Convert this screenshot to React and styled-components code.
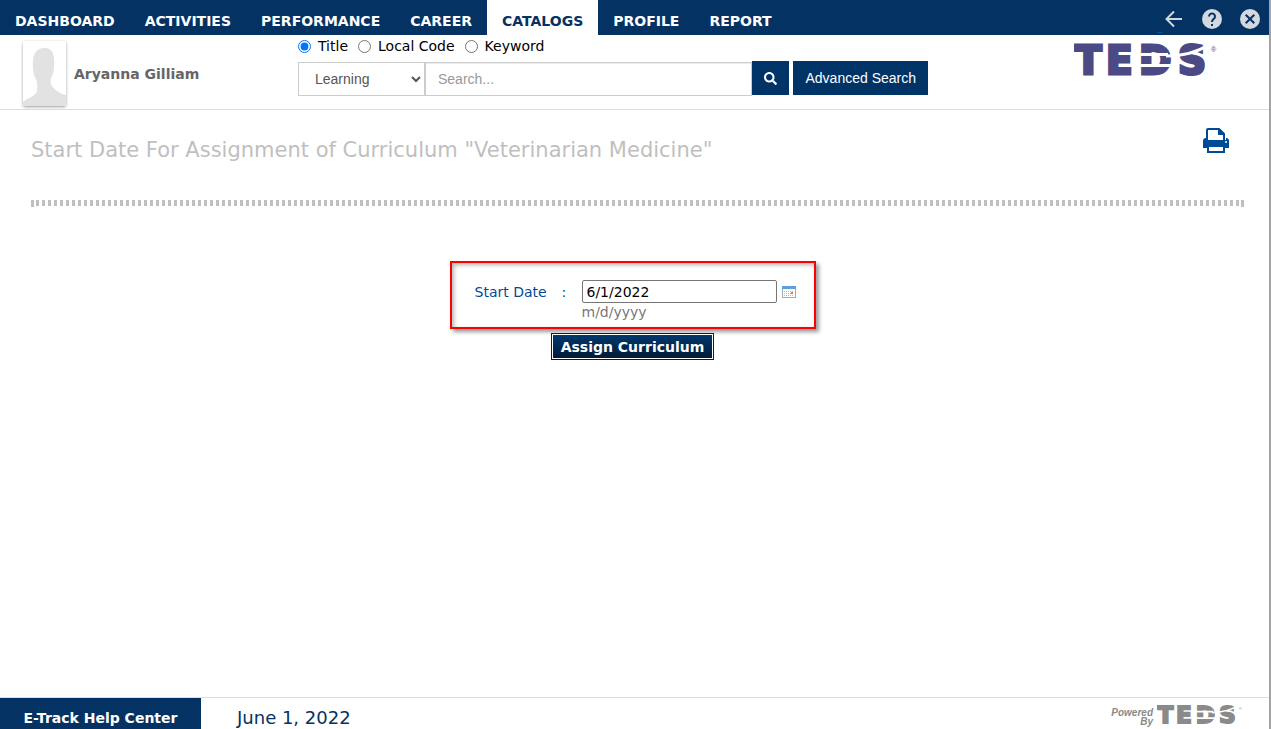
import React, { useState } from 'react';
import styled, { createGlobalStyle, css } from 'styled-components';
import { FaSearch } from 'react-icons/fa';

const navy = '#043263';
const brandBlue = '#004b98';
const verdana = "Verdana, 'DejaVu Sans', sans-serif";
const arial = "'Liberation Sans', Arial, sans-serif";

const GlobalStyle = createGlobalStyle`
  * {
    box-sizing: border-box;
  }
  body {
    margin: 0;
    background: #fff;
    font-family: ${verdana};
    font-size: 14px;
  }
`;

const Page = styled.div`
  display: flex;
  flex-direction: column;
  min-height: 100vh;
  border-right: 2px solid #a3a3a3;
`;

const TopBar = styled.nav`
  display: flex;
  justify-content: space-between;
  height: 35px;
  background: ${navy};
`;

const Menu = styled.ul`
  display: flex;
  margin: 0;
  padding: 0;
  list-style: none;
`;

const MenuLink = styled.a`
  display: block;
  height: 35px;
  padding: 4px 15px 0;
  line-height: 34px;
  font-weight: bold;
  text-decoration: none;
  color: #fff;
  ${props => props.$active && css`
    background: #fff;
    color: ${navy};
  `}
`;

const TopActions = styled.div`
  display: flex;
  align-items: center;
  gap: 14px;
  padding: 3px 7px 0 0;
  &::before {
    content: '';
    align-self: flex-end;
    width: 5px;
    height: 1px;
    margin: 0 -14px 2px 0;
    background: #0052a5;
  }
`;

const IconButton = styled.button`
  display: flex;
  padding: 0;
  border: 0;
  background: none;
  color: ${props => props.$color || '#d2d8e0'};
  cursor: pointer;
`;

const Header = styled.header`
  display: flex;
  align-items: flex-start;
  height: 75px;
  padding-left: 23px;
  border-bottom: 1px solid #ddd;
`;

const User = styled.div`
  display: flex;
  align-items: center;
  gap: 8px;
  width: 275px;
  padding-top: 6px;
  font-weight: bold;
  color: #666;
`;

const Avatar = styled.svg`
  border-radius: 2px;
  box-shadow: 0 1px 3px rgba(0, 0, 0, 0.4);
`;

const SearchForm = styled.form`
  width: 630px;
`;

const RadioRow = styled.div`
  display: flex;
  align-items: center;
  gap: 10px;
  height: 22px;
`;

const RadioLabel = styled.label`
  display: flex;
  align-items: center;
  gap: 7px;
  input {
    width: 13px;
    height: 13px;
    margin: 0;
  }
`;

const SearchRow = styled.div`
  display: flex;
  margin-top: 4px;
  font-family: ${arial};
`;

const searchField = css`
  height: 34px;
  margin-top: 1px;
  border: 1px solid #ccc;
  border-radius: 0;
  background: #fff;
  font-family: ${arial};
  font-size: 14px;
  color: #555;
`;

const SearchSelect = styled.select`
  ${searchField}
  width: 127px;
  padding: 0 0 0 12px;
`;

const SearchInput = styled.input`
  ${searchField}
  flex: 1;
  min-width: 0;
  padding: 0 12px;
  box-shadow: inset 0 1px 1px rgba(0, 0, 0, 0.08);
  &::placeholder {
    color: #999;
  }
`;

const BlueButton = styled.button`
  height: 34px;
  padding: 0 12px;
  border: 0;
  background: #003366;
  font-family: ${arial};
  font-size: 14px;
  color: #fff;
  cursor: pointer;
`;

const SearchButton = styled(BlueButton)`
  display: flex;
  align-items: center;
  justify-content: center;
  width: 37px;
  margin-right: 4px;
`;

const HeaderLogo = styled.div`
  margin-left: auto;
  padding-right: 51px;
`;

const Content = styled.main`
  flex: 1;
  padding: 18px 25px 0 31px;
`;

const TitleRow = styled.div`
  display: flex;
  align-items: flex-start;
  justify-content: space-between;
  padding-right: 14px;
`;

const Title = styled.h1`
  margin: 8px 0 0;
  font-size: 21px;
  line-height: 28px;
  font-weight: normal;
  color: #bfbfbf;
`;

const Divider = styled.div`
  height: 7px;
  margin-top: 36px;
  border: solid #bfbfbf;
  border-width: 0 3px;
  background: linear-gradient(to right, transparent 2px, #bfbfbf 2px, #bfbfbf 5px, transparent 5px) 0 0 / 6px 6px repeat-x;
`;

const AssignForm = styled.form`
  display: flex;
  flex-direction: column;
  align-items: center;
  gap: 4px;
  margin-top: 54px;
  padding-right: 10px;
`;

const DateBox = styled.div`
  display: grid;
  grid-template-columns: 87px 20px 195px auto;
  align-items: center;
  width: 366px;
  height: 68px;
  padding: 17px 0 6px 23px;
  border: 2px solid #f00;
  box-shadow: 3px 3px 4px rgba(0, 0, 0, 0.4), inset 2px 2px 4px rgba(0, 0, 0, 0.3);
  color: ${brandBlue};
`;

const DateInput = styled.input`
  height: 23px;
  padding: 0 4px;
  border: 1px solid #767676;
  border-radius: 2px;
  font-family: ${verdana};
  font-size: 14px;
  color: #000;
`;

const CalendarButton = styled(IconButton)`
  padding-left: 5px;
`;

const Hint = styled.span`
  grid-column: 3;
  line-height: 18px;
  color: #777;
`;

const AssignButton = styled.button`
  height: 27px;
  padding: 0 9px;
  border: 1px solid #001f3f;
  box-shadow: inset 0 0 0 1px #fff;
  background: linear-gradient(#003a70, #001a36);
  font-family: ${verdana};
  font-size: 14px;
  font-weight: bold;
  color: #fff;
  cursor: pointer;
`;

const Footer = styled.footer`
  display: flex;
  height: 32px;
  border-top: 1px solid #ddd;
`;

const HelpLink = styled.a`
  width: 201px;
  padding-top: 4px;
  background: ${navy};
  line-height: 32px;
  text-align: center;
  font-weight: bold;
  text-decoration: none;
  color: #fff;
  overflow: hidden;
`;

const Today = styled.span`
  padding-top: 4px;
  padding-left: 36px;
  font-size: 18px;
  line-height: 32px;
  color: ${navy};
  overflow: hidden;
`;

const PoweredBy = styled.div`
  display: flex;
  align-items: flex-start;
  gap: 4px;
  margin-left: auto;
  padding: 2px 26px 0 0;
  color: #8a8a8a;
`;

const PoweredText = styled.span`
  padding-top: 8px;
  font: italic bold 10px/9px ${arial};
  text-align: right;
`;

const TedsLogo = ({ width, color }) => (
  <svg width={width} viewBox="0 -10 144 49" role="img" aria-label="TEDS">
    <text x="1 32 65 104" y="29" fontFamily="'DejaVu Sans', sans-serif" fontWeight="bold" fontSize="39" fill={color} stroke={color} strokeWidth="3">TEDS</text>
    <g fill="none" stroke="#fff">
      <path d="M64 9.500H94M64 20.500H102" strokeWidth="3" />
      <path d="M92 11Q118 11 136 -1" strokeWidth="3" />
    </g>
    <text x="137" y="7" fontFamily="'Liberation Sans', sans-serif" fontSize="7" fill={color}>®</text>
  </svg>
);

const MENU = ['Dashboard', 'Activities', 'Performance', 'Career', 'Catalogs', 'Profile', 'Report'];
const SEARCH_TYPES = ['Title', 'Local Code', 'Keyword'];

const App = () => {
  const [searchType, setSearchType] = useState('Title');
  const [startDate, setStartDate] = useState('6/1/2022');

  return (
    <Page>
      <GlobalStyle />
      <TopBar>
        <Menu>
          {MENU.map(item => (
            <li key={item}>
              <MenuLink href={`#${item.toLowerCase()}`} $active={item === 'Catalogs'}>{item.toUpperCase()}</MenuLink>
            </li>
          ))}
        </Menu>
        <TopActions>
          <IconButton type="button" aria-label="Back">
            <svg width="24" height="24" viewBox="0 0 24 24" fill="none" stroke="currentColor" strokeWidth="2">
              <path d="M20 12H5M12 4.5L4.5 12L12 19.5" />
            </svg>
          </IconButton>
          <IconButton type="button" aria-label="Help">
            <svg width="24" height="24" viewBox="0 0 24 24">
              <circle cx="12" cy="12" r="10" fill="currentColor" />
              <path d="M9 9.5a3 3 0 1 1 5.2 2C13.200 12.500 12 13 12 15" fill="none" stroke={navy} strokeWidth="2" />
              <path d="M11 17h2v2h-2z" fill={navy} />
            </svg>
          </IconButton>
          <IconButton type="button" aria-label="Close">
            <svg width="24" height="24" viewBox="0 0 24 24">
              <circle cx="12" cy="12" r="10" fill="currentColor" />
              <path d="M7.700 7.700L16.300 16.300M16.300 7.700L7.700 16.300" stroke={navy} strokeWidth="2" />
            </svg>
          </IconButton>
        </TopActions>
      </TopBar>

      <Header>
        <User>
          <Avatar width="43" height="65" viewBox="0 0 43 65" aria-hidden="true">
            <rect width="43" height="65" fill="#fff" />
            <path d="M0 65V61Q3 58 8 56Q14 53 14 49Q15 45 13 38Q10 34 10 27C9 14 12 7 22 7C30 7 32 15 31 25Q31 33 28 37Q27 43 29 45Q34 52 43 54V65Z" fill="#e2e2e2" />
          </Avatar>
          <span>Aryanna Gilliam</span>
        </User>
        <SearchForm onSubmit={e => e.preventDefault()}>
          <RadioRow>
            {SEARCH_TYPES.map(type => (
              <RadioLabel key={type}>
                <input type="radio" name="searchType" checked={searchType === type} onChange={() => setSearchType(type)} />
                {type}
              </RadioLabel>
            ))}
          </RadioRow>
          <SearchRow>
            <SearchSelect aria-label="Search in">
              <option>Learning</option>
            </SearchSelect>
            <SearchInput type="text" placeholder="Search..." aria-label="Search" />
            <SearchButton type="submit" aria-label="Search">
              <FaSearch size={13} />
            </SearchButton>
            <BlueButton type="button">Advanced Search</BlueButton>
          </SearchRow>
        </SearchForm>
        <HeaderLogo>
          <TedsLogo width={144} color="#4c4a85" />
        </HeaderLogo>
      </Header>

      <Content>
        <TitleRow>
          <Title>Start Date For Assignment of Curriculum "Veterinarian Medicine"</Title>
          <IconButton type="button" aria-label="Print" $color={brandBlue}>
            <svg width="28" height="25" viewBox="0 0 28 25">
              <path d="M5 12V2Q5 1 6 1H17L22 6V12" fill="#fff" stroke="currentColor" strokeWidth="2" />
              <path d="M16 1H18L23 6V7H16Z" fill="currentColor" />
              <path d="M1 20V13Q1 10 4 10V12H24V10Q27 10 27 13V20H1Z" fill="currentColor" />
              <path d="M6 18H22V24H6Z" fill="#fff" stroke="currentColor" strokeWidth="2" />
              <circle cx="24" cy="14" r="1" fill="#fff" />
            </svg>
          </IconButton>
        </TitleRow>
        <Divider />
        <AssignForm onSubmit={e => e.preventDefault()}>
          <DateBox>
            <label htmlFor="startDate">Start Date</label>
            <span>:</span>
            <DateInput id="startDate" type="text" value={startDate} onChange={e => setStartDate(e.target.value)} />
            <CalendarButton type="button" aria-label="Pick a date">
              <svg width="14" height="13" viewBox="0 0 14 13">
                <rect x="0.500" y="1.500" width="13" height="11" fill="#fff" stroke="#aaa" />
                <rect y="1" width="14" height="3" fill="#5a9fe0" />
                <path d="M2 6.500H12M2 8.500H12M2 10.500H12" stroke="#bbb" strokeDasharray="1 1" />
                <rect x="9" y="7" width="2" height="2" fill="#e66" />
              </svg>
            </CalendarButton>
            <Hint>m/d/yyyy</Hint>
          </DateBox>
          <AssignButton type="submit">Assign Curriculum</AssignButton>
        </AssignForm>
      </Content>

      <Footer>
        <HelpLink href="#help">E-Track Help Center</HelpLink>
        <Today>June 1, 2022</Today>
        <PoweredBy>
          <PoweredText>Powered<br />By</PoweredText>
          <TedsLogo width={86} color="#8a8a8a" />
        </PoweredBy>
      </Footer>
    </Page>
  );
};

export default App;
